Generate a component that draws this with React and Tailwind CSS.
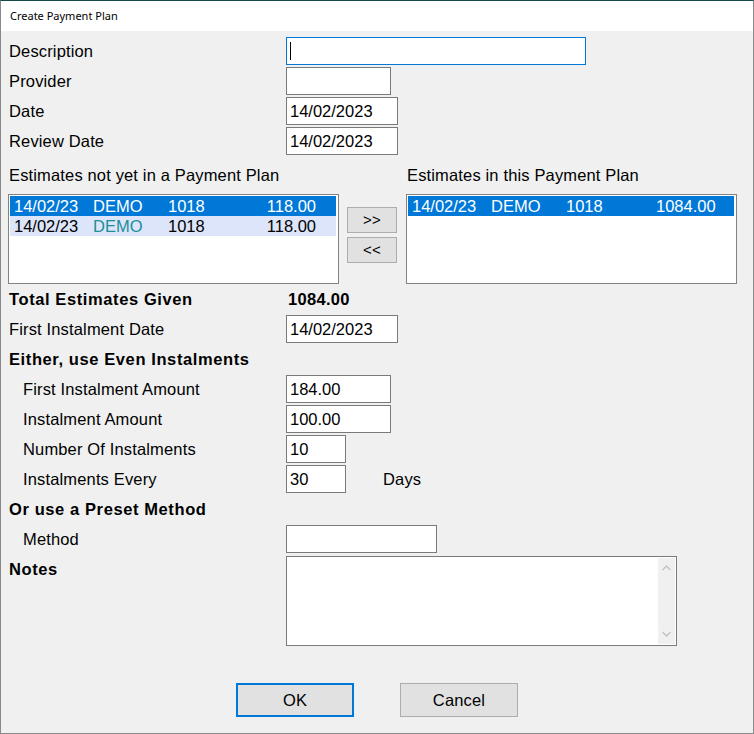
import React from 'react';

const FONT = "font-['Liberation_Sans',Arial,sans-serif]";

const LEFT_ROWS = [
  { date: '14/02/23', name: 'DEMO', num: '1018', amount: '118.00', selected: true },
  { date: '14/02/23', name: 'DEMO', num: '1018', amount: '118.00', selected: false },
];

const RIGHT_ROWS = [
  { date: '14/02/23', name: 'DEMO', num: '1018', amount: '1084.00', selected: true },
];

function Field({ width, value, focused }) {
  return (
    <div
      className={`h-[28px] ${width} bg-white border flex items-center pl-[3px] tracking-normal ${
        focused ? 'border-[#0078d7]' : 'border-[#7a7a7a]'
      }`}
    >
      {focused && <span className="w-px h-[18px] bg-black" />}
      {value}
    </div>
  );
}

function Row({ label, bold, indent, children }) {
  return (
    <div className="h-[30px] flex items-center">
      <div className={`w-[277px] ${bold ? 'font-bold tracking-[0.6px]' : ''} ${indent ? 'pl-[14px]' : ''}`}>{label}</div>
      {children}
    </div>
  );
}

function ListBox({ rows }) {
  return (
    <div className="w-[331px] h-[90px] bg-white border border-[#828282] p-px tracking-normal">
      {rows.map((r, i) => (
        <div
          key={i}
          className={`h-[20px] w-[326px] flex items-center pl-[4px] leading-[20px] ${
            r.selected ? 'bg-[#0078d7] text-white' : 'bg-[#dde5fa] text-black'
          }`}
        >
          <span className="w-[79px]">{r.date}</span>
          <span className={`w-[75px] ${r.selected ? '' : 'text-[#1b8f99]'}`}>{r.name}</span>
          <span className="w-[90px]">{r.num}</span>
          <span className="w-[58px] text-right">{r.amount}</span>
        </div>
      ))}
    </div>
  );
}

function SmallButton({ children }) {
  return (
    <div className="w-[50px] h-[26px] bg-[#e1e1e1] border border-[#adadad] flex items-center justify-center text-[15px]">
      {children}
    </div>
  );
}

function Chevron({ up }) {
  return (
    <svg width="9" height="6" viewBox="0 0 9 6" className="block">
      <path
        d={up ? 'M0.5 5 L4.5 1 L8.5 5' : 'M0.5 1 L4.5 5 L8.5 1'}
        fill="none"
        stroke="#c2c2c2"
        strokeWidth="1.3"
      />
    </svg>
  );
}

export default function App() {
  return (
    <div className={`w-[754px] h-[734px] bg-[#f0f0f0] border border-[#8a8a8a] border-t-[#17484c] text-[16.5px] tracking-[0.15px] text-black ${FONT}`}>
      {/* Title bar */}
      <div className="h-[30px] bg-white flex items-center pl-[9px] text-[11px] tracking-normal font-['Noto_Sans',sans-serif]">
        Create Payment Plan
      </div>

      <div className="pl-[8px] pt-[5px]">
        <Row label="Description">
          <Field width="w-[300px]" focused />
        </Row>
        <Row label="Provider">
          <Field width="w-[105px]" />
        </Row>
        <Row label="Date">
          <Field width="w-[112px]" value="14/02/2023" />
        </Row>
        <Row label="Review Date">
          <Field width="w-[112px]" value="14/02/2023" />
        </Row>

        {/* Estimate lists */}
        <div className="flex mt-[4px] -ml-px">
          <div>
            <div className="h-[30px] flex items-center pl-px">Estimates not yet in a Payment Plan</div>
            <div className="mt-[4px]">
              <ListBox rows={LEFT_ROWS} />
            </div>
          </div>
          <div className="ml-[8px] mr-[9px] pt-[47px] flex flex-col gap-[4px]">
            <SmallButton>&gt;&gt;</SmallButton>
            <SmallButton>&lt;&lt;</SmallButton>
          </div>
          <div>
            <div className="h-[30px] flex items-center pl-px">Estimates in this Payment Plan</div>
            <div className="mt-[4px]">
              <ListBox rows={RIGHT_ROWS} />
            </div>
          </div>
        </div>

        <Row label="Total Estimates Given" bold>
          <span className="font-bold pl-[2px] tracking-[0.3px]">1084.00</span>
        </Row>
        <Row label="First Instalment Date">
          <Field width="w-[112px]" value="14/02/2023" />
        </Row>
        <Row label="Either, use Even Instalments" bold />
        <Row label="First Instalment Amount" indent>
          <Field width="w-[105px]" value="184.00" />
        </Row>
        <Row label="Instalment Amount" indent>
          <Field width="w-[105px]" value="100.00" />
        </Row>
        <Row label="Number Of Instalments" indent>
          <Field width="w-[60px]" value="10" />
        </Row>
        <Row label="Instalments Every" indent>
          <Field width="w-[60px]" value="30" />
          <span className="ml-[37px]">Days</span>
        </Row>
        <Row label="Or use a Preset Method" bold />
        <Row label="Method" indent>
          <Field width="w-[151px]" />
        </Row>

        {/* Notes */}
        <div className="flex">
          <div className="w-[277px] h-[30px] flex items-center font-bold tracking-[0.6px]">Notes</div>
          <div className="mt-[2px] w-[391px] h-[90px] bg-white border border-[#7a7a7a] flex justify-end p-px">
            <div className="w-[17px] h-full bg-[#f0f0f0] flex flex-col items-center justify-between py-[7px]">
              <Chevron up />
              <Chevron />
            </div>
          </div>
        </div>

        {/* Buttons */}
        <div className="flex mt-[37px] pl-[227px] gap-[46px]">
          <div className="w-[118px] h-[34px] bg-[#e1e1e1] border-2 border-[#0078d7] flex items-center justify-center">
            OK
          </div>
          <div className="w-[118px] h-[34px] bg-[#e1e1e1] border border-[#adadad] flex items-center justify-center">
            Cancel
          </div>
        </div>
      </div>
    </div>
  );
}
